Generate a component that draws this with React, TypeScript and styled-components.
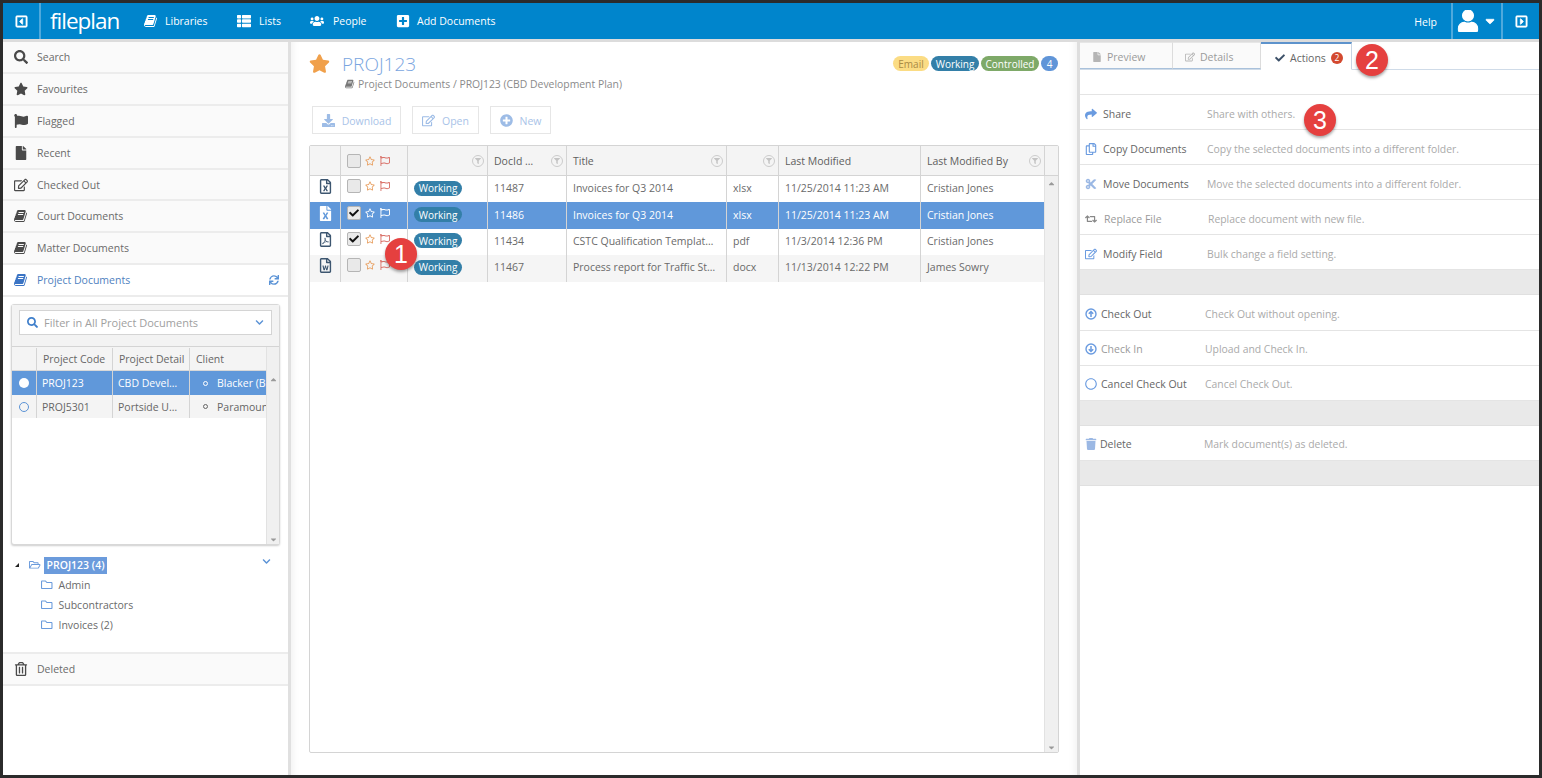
import React from "react";
import styled, { createGlobalStyle } from "styled-components";
import {
  FaSearch, FaStar, FaRegStar, FaFlag, FaRegFlag, FaFile, FaRegEdit, FaSync, FaThList, FaUsers,
  FaPlusSquare, FaChevronDown, FaRegFolder, FaRegFolderOpen, FaRegTrashAlt, FaTrash, FaDownload, FaPlusCircle,
  FaCheck, FaShare, FaRegCopy, FaCut, FaRetweet, FaRegCircle, FaFilter, FaUser, FaCaretDown, FaRegCaretSquareLeft,
  FaRegCaretSquareRight, FaRegFileExcel, FaRegFilePdf, FaRegFileWord, FaCaretUp, FaFileExcel,
} from "react-icons/fa";

const Global = createGlobalStyle`
  html, body { margin: 0; padding: 0; background: #2b2b2b; }
  * { box-sizing: border-box; }
`;

const BookIcon = () => (
  <svg width="1em" height="1em" viewBox="0 0 1792 1792" fill="currentColor">
    <path d="M1639 478q40 57 18 129l-275 906q-19 64-76.5 107.5t-122.5 43.5h-923q-77 0-148.5-53.5t-99.5-131.5q-24-67-2-127 0-4 3-27t4-37q1-8-3-21.5t-3-19.5q2-11 8-21t16.5-23.5 16.5-23.5q23-38 45-91.5t30-91.5q3-10 .5-30t-.5-28q3-11 17-28t17-23q21-36 42-92t25-90q1-9-2.5-32t.5-28q4-13 22-30.5t22-22.5q19-26 42.5-84.5t27.5-96.5q1-8-3-25.5t-2-26.5q2-8 9-18t18-23 17-21q8-12 16.5-30.5t15-35 16-36 19.5-32 26.5-23.5 36-11.5 47.5 5.5l-1 3q38-9 51-9h761q74 0 114 56t18 130l-274 906q-36 119-71.5 153.5t-128.5 34.5h-869q-27 0-38 15-11 16-1 43 24 70 144 70h923q29 0 56-15.5t35-41.5l300-987q7-22 5-57 38 15 59 43zm-1064 2q-4 13 2 22.5t20 9.5h608q13 0 25.5-9.5t16.5-22.5l21-64q4-13-2-22.5t-20-9.5h-608q-13 0-25.5 9.5t-16.5 22.5zm-83 256q-4 13 2 22.5t20 9.5h608q13 0 25.5-9.5t16.5-22.5l21-64q4-13-2-22.5t-20-9.5h-608q-13 0-25.5 9.5t-16.5 22.5z" />
  </svg>
);

const CircleArrow = ({ down }: { down?: boolean }) => (
  <svg width="12" height="12" viewBox="0 0 12 12" fill="none" stroke="currentColor">
    <circle cx="6" cy="6" r="5" strokeWidth="1.4" />
    <path d={down ? "M6 3v5.4M3.8 6.2 6 8.5l2.2-2.3" : "M6 9V3.6M3.8 5.8 6 3.5l2.2 2.3"} strokeWidth="1.5" />
  </svg>
);

const Frame = styled.div`
  position: relative;
  width: 1542px;
  height: 778px;
  padding: 3px;
  background: #2b2b2b;
  font-family: "Open Sans", "Liberation Sans", sans-serif;
  font-size: 10.5px;
  color: #666;
  overflow: hidden;
  display: flex;
  flex-direction: column;
`;

const TopBar = styled.header`
  height: 36px;
  flex: none;
  background: #0085cc;
  color: #fff;
  display: flex;
  align-items: stretch;
`;
const BarSquare = styled.div<{ $w: number }>`
  width: ${(p) => p.$w}px;
  flex: none;
  display: flex;
  align-items: center;
  justify-content: center;
  font-size: 13px;
  svg path { stroke: currentColor; stroke-width: 24px; }
`;
const BarSquareRight = styled(BarSquare)`
  border-left: 2px solid #4fa9dc;
`;
const BarSquareLeft = styled(BarSquare)`
  border-right: 2px solid #4fa9dc;
`;
const Logo = styled.div`
  font-size: 22.5px;
  font-weight: 500;
  letter-spacing: -1px;
  line-height: 36px;
  margin-left: 9px;
  width: 74px;
  margin-right: 20px;
  padding-bottom: 3px;
`;
const NavItem = styled.div<{ $w: number; $gap: number }>`
  display: flex;
  align-items: center;
  font-size: 10.5px;
  gap: ${(p) => p.$gap}px;
  width: ${(p) => p.$w}px;
  flex: none;
  svg { font-size: 14px; }
`;
const Spacer = styled.div`
  flex: 1;
`;
const HelpLink = styled.div`
  align-self: center;
  margin-right: 14px;
  padding-top: 1px;
`;
const UserMenu = styled(BarSquareRight)`
  gap: 4px;
  svg:first-child { font-size: 22px; }
  svg:last-child { font-size: 14px; }
`;

const Body = styled.div`
  flex: 1;
  min-height: 0;
  display: flex;
  background: #fff;
  border-top: 3px solid #dcdcdc;
`;

const Sidebar = styled.aside`
  width: 288px;
  flex: none;
  border-right: 3px solid #e0e0e0;
  background: #fff;
  display: flex;
  flex-direction: column;
`;
const SideRow = styled.div<{ $active?: boolean }>`
  height: 31.9px;
  flex: none;
  display: flex;
  align-items: center;
  padding: 0 9px 0 11px;
  background: ${(p) => (p.$active ? "#fff" : "#fafafa")};
  color: ${(p) => (p.$active ? "#4f7fc0" : "#6a6a6a")};
  border-bottom: 2px solid #ececec;
`;
const SideIcon = styled.span<{ $active?: boolean }>`
  width: 23px;
  flex: none;
  display: flex;
  font-size: 14px;
  color: ${(p) => (p.$active ? "#3b74c4" : "#4a4a4a")};
`;
const SideLabel = styled.span`
  flex: 1;
`;
const RefreshIcon = styled.span`
  color: #5b93d6;
  font-size: 10px;
  display: flex;
`;

const ProjectSection = styled.div`
  height: 356.8px;
  flex: none;
  padding: 7px 8px 0 8px;
  border-bottom: 2px solid #ececec;
  display: flex;
  flex-direction: column;
`;
const PickerCard = styled.div`
  height: 241px;
  flex: none;
  border: 1px solid #d8d8d8;
  border-radius: 3px;
  box-shadow: 0 1px 2px rgba(0, 0, 0, 0.2);
  display: flex;
  flex-direction: column;
  background: #fff;
`;
const FilterBar = styled.div`
  height: 42px;
  flex: none;
  padding: 5px 7px 11px 7px;
  background: #f3f3f3;
  border-bottom: 1px solid #d4d4d4;
`;
const FilterInput = styled.div`
  height: 25px;
  background: #fff;
  border: 1px solid #d4d4d4;
  display: flex;
  align-items: center;
  padding: 0 7px;
  gap: 6px;
  color: #a0a0a0;
  font-size: 11px;
`;
const FilterIcon = styled.span`
  color: #3f7fcb;
  display: flex;
  font-size: 11px;
`;
const ChevronIcon = styled.span`
  color: #5b93d6;
  font-size: 9px;
  display: flex;
  margin-left: auto;
`;
const PickerGrid = styled.div`
  flex: 1;
  display: grid;
  grid-template-columns: 1fr 13px;
  min-height: 0;
`;
const PickerColumn = styled.div`
  display: flex;
  flex-direction: column;
  min-width: 0;
`;
const PickerRow = styled.div<{ $kind: "head" | "sel" | "alt" }>`
  display: grid;
  grid-template-columns: 24px 76px 77px 1fr;
  height: ${(p) => (p.$kind === "alt" ? 23 : 24)}px;
  padding-top: ${(p) => (p.$kind === "head" ? 1 : 0)}px;
  flex: none;
  background: ${(p) => (p.$kind === "sel" ? "#6098da" : "#f4f4f4")};
  color: ${(p) => (p.$kind === "sel" ? "#fff" : "#666")};
  border-bottom: ${(p) => (p.$kind === "head" ? "1px solid #d8d8d8" : "none")};
`;
const PickerCell = styled.div`
  display: flex;
  align-items: center;
  padding: 0 5px;
  border-left: 1px solid #d4d4d4;
  white-space: nowrap;
  overflow: hidden;
  min-width: 0;
  &:first-child { border-left: none; justify-content: center; padding: 0; }
`;
const HeadCellText = styled.span`
  padding-left: 1px;
`;
const ClientDot = styled.span`
  width: 5px;
  height: 5px;
  border: 1px solid currentColor;
  border-radius: 50%;
  margin: 0 9px 0 8px;
  flex: none;
`;
const Radio = styled.span<{ $on?: boolean }>`
  width: 10px;
  height: 10px;
  border-radius: 50%;
  background: ${(p) => (p.$on ? "#fff" : "transparent")};
  border: ${(p) => (p.$on ? "none" : "1.5px solid #5b93d6")};
`;
const ScrollTrack = styled.div<{ $head?: number }>`
  background: #f0f0f0;
  border-left: 1px solid #e2e2e2;
  display: flex;
  flex-direction: column;
  justify-content: space-between;
  align-items: center;
  padding-top: ${(p) => p.$head ?? 0}px;
  color: #9a9a9a;
  font-size: 9px;
  svg { display: block; }
`;
const Tree = styled.div`
  position: relative;
  padding: 10px 0 0 4px;
`;
const TreeRow = styled.div<{ $indent: number }>`
  height: 20px;
  display: flex;
  align-items: center;
  gap: 6px;
  padding-left: ${(p) => p.$indent}px;
  color: #6a6a6a;
`;
const TreeIcon = styled.span`
  color: #6b9bdc;
  font-size: 11.5px;
  display: flex;
`;
const TreeArrow = styled.span`
  width: 0;
  height: 0;
  border-left: 4px solid transparent;
  border-bottom: 4px solid #222;
  margin-right: 4px;
`;
const TreeSelected = styled.span`
  background: #6b9bdc;
  color: #fff;
  font-weight: 600;
  padding: 1px 3px;
  line-height: 15px;
  margin-left: -3px;
`;
const TreeChevron = styled.span`
  position: absolute;
  right: 9px;
  top: 12px;
  color: #5b93d6;
  font-size: 9px;
  display: flex;
`;

const Main = styled.main`
  width: 786px;
  flex: none;
  padding: 0 0 0 18px;
  display: flex;
  flex-direction: column;
  background: #fff;
  box-shadow: inset 9px 0 8px -8px rgba(0,0,0,0.07), inset -9px 0 8px -8px rgba(0,0,0,0.07);
`;
const TitleRow = styled.div`
  width: 750px;
  height: 64px;
  flex: none;
  display: flex;
  align-items: flex-start;
  padding-top: 9px;
`;
const BigStar = styled.span`
  color: #f0a04b;
  font-size: 21px;
  display: flex;
  margin: 2px 12px 0 0;
`;
const TitleBlock = styled.div`
  display: flex;
  flex-direction: column;
`;
const Title = styled.div`
  font-size: 19px;
  font-weight: 300;
  color: #7aa5e0;
  line-height: 26px;
`;
const Crumb = styled.div`
  display: flex;
  align-items: center;
  gap: 3px;
  font-size: 10.4px;
  color: #8a8a8a;
  margin: 0 0 0 3px;
  svg { font-size: 10px; color: #777; }
`;
const Badges = styled.div`
  margin-left: auto;
  margin-top: 5px;
  display: flex;
  gap: 2px;
  padding-right: 1px;
`;
const Pill = styled.span<{ $bg: string; $fg: string; $w: number }>`
  height: 15px;
  width: ${(p) => p.$w}px;
  border-radius: 8px;
  background: ${(p) => p.$bg};
  color: ${(p) => p.$fg};
  font-size: 10px;
  display: inline-flex;
  align-items: center;
  justify-content: center;
`;
const Toolbar = styled.div`
  height: 28px;
  flex: none;
  display: flex;
  gap: 11px;
  margin: 0 0 11px 3px;
`;
const ToolButton = styled.div<{ $w: number }>`
  width: ${(p) => p.$w}px;
  border: 1px solid #e6e6e6;
  display: flex;
  align-items: center;
  justify-content: center;
  gap: 7px;
  padding-top: 1px;
  color: #a9c3e8;
  svg { font-size: 13px; color: #9dbce6; }
`;
const TableBox = styled.div`
  width: 750px;
  height: 608px;
  flex: none;
  border: 1px solid #d4d4d4;
  border-radius: 2px;
  display: grid;
  grid-template-columns: 1fr 14px;
  grid-template-rows: 30px 1fr;
  background: #fff;
`;
const Cols = "30px 67px 80px 79px 160px 52px 142px 1fr";
const HeadRow = styled.div`
  grid-column: 1 / 2;
  display: grid;
  grid-template-columns: ${Cols};
  background: #f4f4f4;
  border-bottom: 1px solid #d4d4d4;
`;
const HeadCorner = styled.div`
  background: #f4f4f4;
  border-left: 1px solid #d4d4d4;
  border-bottom: 1px solid #d4d4d4;
`;
const RowsArea = styled.div`
  display: flex;
  flex-direction: column;
  min-width: 0;
`;
const DocRow = styled.div<{ $kind?: "sel" | "alt" }>`
  height: 26.4px;
  flex: none;
  display: grid;
  grid-template-columns: ${Cols};
  background: ${(p) => (p.$kind === "sel" ? "#6098da" : p.$kind === "alt" ? "#f5f5f5" : "#fff")};
  color: ${(p) => (p.$kind === "sel" ? "#fff" : "#6a6a6a")};
`;
const Cell = styled.div`
  display: flex;
  align-items: center;
  padding: 0 6px 2px 6px;
  border-left: 1px solid #d4d4d4;
  white-space: nowrap;
  overflow: hidden;
  min-width: 0;
  &:first-child { border-left: none; justify-content: center; padding: 0 0 5px 0; }
`;
const HeadCell = styled(Cell)`
  justify-content: space-between;
  padding: 1px 3px 0 6px;
  color: #5e5e5e;
  &:first-child { padding: 0; }
`;
const FilterBadge = styled.span`
  width: 12px;
  height: 12px;
  border: 1px solid #ccc;
  border-radius: 50%;
  color: #c4c4c4;
  font-size: 6px;
  display: inline-flex;
  align-items: center;
  justify-content: center;
  margin-left: auto;
`;
const FileGlyph = styled.span<{ $light?: boolean }>`
  font-size: 15px;
  display: flex;
  color: ${(p) => (p.$light ? "#fff" : "#3d5670")};
`;
const MarkCell = styled(Cell)`
  gap: 4px;
  padding: 0 0 6px 6px;
`;
const HeadMarkCell = styled(MarkCell)`
  padding: 1px 0 0 6px;
`;
const Check = styled.span`
  width: 14px;
  height: 14px;
  background: #e9e9e9;
  border: 1px solid #b5b5b5;
  border-radius: 2px;
  display: inline-flex;
  align-items: center;
  justify-content: center;
  color: #111;
  font-size: 10px;
  flex: none;
`;
const MarkStar = styled.span<{ $light?: boolean }>`
  color: ${(p) => (p.$light ? "#fff" : "#e8a062")};
  font-size: 10px;
  display: flex;
`;
const MarkFlag = styled.span<{ $light?: boolean }>`
  color: ${(p) => (p.$light ? "#fff" : "#d9726a")};
  font-size: 10px;
  display: flex;
  margin-left: 1px;
`;

const Right = styled.section`
  flex: 1;
  min-width: 0;
  border-left: 3px solid #dedede;
  display: flex;
  flex-direction: column;
  background: #fff;
`;
const Tabs = styled.div`
  height: 28px;
  flex: none;
  display: flex;
  border-bottom: 1px solid #cfdbe8;
`;
const Tab = styled.div<{ $w: number; $on?: boolean }>`
  width: ${(p) => p.$w}px;
  flex: none;
  display: flex;
  align-items: center;
  gap: 5px;
  padding: 2px 0 0 ${(p) => (p.$on ? 14 : 12)}px;
  background: ${(p) => (p.$on ? "#fff" : "#fafafa")};
  color: ${(p) => (p.$on ? "#666" : "#9a9a9a")};
  border-right: 1px solid ${(p) => (p.$on ? "#c8d5e4" : "#dcdcdc")};
  border-top: ${(p) => (p.$on ? 2 : 1)}px solid ${(p) => (p.$on ? "#5e93cc" : "#e6e6e6")};
  margin-bottom: ${(p) => (p.$on ? -1 : 0)}px;
  border-bottom: ${(p) => (p.$on ? "1px solid #fff" : "1px solid #a9c1db")};
`;
const TabIcon = styled.span<{ $on?: boolean }>`
  display: flex;
  font-size: 10px;
  color: ${(p) => (p.$on ? "#3c5068" : "#b5b5b5")};
`;
const CountDot = styled.span`
  width: 12px;
  height: 12px;
  border-radius: 50%;
  background: #d3492f;
  color: #fff;
  font-size: 8.5px;
  display: inline-flex;
  align-items: center;
  justify-content: center;
`;
const BlankRow = styled.div`
  height: 25px;
  flex: none;
  border-bottom: 1px solid #e4e4e4;
`;
const ActionRow = styled.div`
  height: 35.1px;
  flex: none;
  display: flex;
  align-items: center;
  padding: 3px 0 0 5px;
  border-bottom: 1px solid #e4e4e4;
`;
const ActionIcon = styled.span<{ $w: number; $tone?: "dim" | "soft" }>`
  width: ${(p) => p.$w}px;
  flex: none;
  display: flex;
  font-size: 12px;
  color: ${(p) => (p.$tone === "dim" ? "#888" : p.$tone === "soft" ? "#9bb8e4" : "#6a9be0")};
`;
const ActionLabel = styled.span<{ $dim?: boolean }>`
  width: 104px;
  flex: none;
  color: ${(p) => (p.$dim ? "#9a9a9a" : "#666")};
  white-space: nowrap;
`;
const ActionDesc = styled.span`
  color: #aaa;
  font-size: 10.4px;
`;
const GreySpacer = styled.div`
  height: 25px;
  flex: none;
  background: #e9e9e9;
  border-bottom: 1px solid #e0e0e0;
`;

const Marker = styled.div<{ $x: number; $y: number }>`
  position: absolute;
  left: ${(p) => p.$x - 16}px;
  top: ${(p) => p.$y - 16}px;
  width: 32px;
  height: 32px;
  border-radius: 50%;
  background: #e5403f;
  box-shadow: 0 2px 3px rgba(0, 0, 0, 0.35);
  color: #fff;
  font-family: "Liberation Sans", Arial, sans-serif;
  font-size: 25px;
  display: flex;
  align-items: center;
  justify-content: center;
`;

const sideTop = [
  { icon: <FaSearch />, label: "Search" },
  { icon: <FaStar />, label: "Favourites" },
  { icon: <FaFlag />, label: "Flagged" },
  { icon: <FaFile />, label: "Recent" },
  { icon: <FaRegEdit />, label: "Checked Out" },
  { icon: <BookIcon />, label: "Court Documents" },
  { icon: <BookIcon />, label: "Matter Documents" },
];

const docs = [
  { file: <FaRegFileExcel />, checked: false, id: "11487", title: "Invoices for Q3 2014", ext: "xlsx", date: "11/25/2014 11:23 AM", by: "Cristian Jones" },
  { file: <FaFileExcel />, checked: true, id: "11486", title: "Invoices for Q3 2014", ext: "xlsx", date: "11/25/2014 11:23 AM", by: "Cristian Jones", kind: "sel" as const },
  { file: <FaRegFilePdf />, checked: true, id: "11434", title: "CSTC Qualification Templat…", ext: "pdf", date: "11/3/2014 12:36 PM", by: "Cristian Jones" },
  { file: <FaRegFileWord />, checked: false, id: "11467", title: "Process report for Traffic St…", ext: "docx", date: "11/13/2014 12:22 PM", by: "James Sowry", kind: "alt" as const },
];

type Act = { icon: React.ReactNode; w: number; label: string; desc: string; dim?: boolean; tone?: "dim" | "soft" };
const actionsA: Act[] = [
  { icon: <FaShare />, w: 18, label: "Share", desc: "Share with others." },
  { icon: <FaRegCopy />, w: 18, label: "Copy Documents", desc: "Copy the selected documents into a different folder." },
  { icon: <FaCut />, w: 18, label: "Move Documents", desc: "Move the selected documents into a different folder.", tone: "soft" },
  { icon: <FaRetweet />, w: 19, label: "Replace File", desc: "Replace document with new file.", dim: true, tone: "dim" },
  { icon: <FaRegEdit />, w: 18, label: "Modify Field", desc: "Bulk change a field setting." },
];
const actionsB: Act[] = [
  { icon: <CircleArrow />, w: 16, label: "Check Out", desc: "Check Out without opening." },
  { icon: <CircleArrow down />, w: 16, label: "Check In", desc: "Upload and Check In.", dim: true },
  { icon: <FaRegCircle />, w: 16, label: "Cancel Check Out", desc: "Cancel Check Out." },
];
const actionsC: Act[] = [
  { icon: <FaTrash />, w: 15, label: "Delete", desc: "Mark document(s) as deleted.", tone: "soft" },
];

const ActionList = ({ items }: { items: Act[] }) => (
  <>
    {items.map((a) => (
      <ActionRow key={a.label}>
        <ActionIcon $w={a.w} $tone={a.tone}>{a.icon}</ActionIcon>
        <ActionLabel $dim={a.dim}>{a.label}</ActionLabel>
        <ActionDesc>{a.desc}</ActionDesc>
      </ActionRow>
    ))}
  </>
);

const HeadFilter = () => (
  <FilterBadge>
    <FaFilter />
  </FilterBadge>
);

export default function App() {
  return (
    <Frame>
      <Global />
      <TopBar>
        <BarSquareLeft $w={38}><FaRegCaretSquareLeft /></BarSquareLeft>
        <Logo>fileplan</Logo>
        <NavItem $w={93} $gap={7}><BookIcon />Libraries</NavItem>
        <NavItem $w={73} $gap={8}><FaThList />Lists</NavItem>
        <NavItem $w={86} $gap={9}><FaUsers />People</NavItem>
        <NavItem $w={110} $gap={7}><FaPlusSquare />Add Documents</NavItem>
        <Spacer />
        <HelpLink>Help</HelpLink>
        <UserMenu $w={50}><FaUser /><FaCaretDown /></UserMenu>
        <BarSquareRight $w={38}><FaRegCaretSquareRight /></BarSquareRight>
      </TopBar>
      <Body>
        <Sidebar>
          {sideTop.map((s) => (
            <SideRow key={s.label}>
              <SideIcon>{s.icon}</SideIcon>
              <SideLabel>{s.label}</SideLabel>
            </SideRow>
          ))}
          <SideRow $active>
            <SideIcon $active><BookIcon /></SideIcon>
            <SideLabel>Project Documents</SideLabel>
            <RefreshIcon><FaSync /></RefreshIcon>
          </SideRow>
          <ProjectSection>
            <PickerCard>
              <FilterBar>
                <FilterInput>
                  <FilterIcon><FaSearch /></FilterIcon>
                  Filter in All Project Documents
                  <ChevronIcon><FaChevronDown /></ChevronIcon>
                </FilterInput>
              </FilterBar>
              <PickerGrid>
                <PickerColumn>
                  <PickerRow $kind="head">
                    <PickerCell />
                    <PickerCell><HeadCellText>Project Code</HeadCellText></PickerCell>
                    <PickerCell><HeadCellText>Project Detail</HeadCellText></PickerCell>
                    <PickerCell><HeadCellText>Client</HeadCellText></PickerCell>
                  </PickerRow>
                  <PickerRow $kind="sel">
                    <PickerCell><Radio $on /></PickerCell>
                    <PickerCell>PROJ123</PickerCell>
                    <PickerCell>CBD Devel…</PickerCell>
                    <PickerCell><ClientDot />Blacker (Bl</PickerCell>
                  </PickerRow>
                  <PickerRow $kind="alt">
                    <PickerCell><Radio /></PickerCell>
                    <PickerCell>PROJ5301</PickerCell>
                    <PickerCell>Portside U…</PickerCell>
                    <PickerCell><ClientDot />Paramoun</PickerCell>
                  </PickerRow>
                </PickerColumn>
                <ScrollTrack $head={28}><FaCaretUp /><FaCaretDown /></ScrollTrack>
              </PickerGrid>
            </PickerCard>
            <Tree>
              <TreeRow $indent={0}>
                <TreeArrow />
                <TreeIcon><FaRegFolderOpen /></TreeIcon>
                <TreeSelected>PROJ123 (4)</TreeSelected>
              </TreeRow>
              <TreeRow $indent={26}><TreeIcon><FaRegFolder /></TreeIcon>Admin</TreeRow>
              <TreeRow $indent={26}><TreeIcon><FaRegFolder /></TreeIcon>Subcontractors</TreeRow>
              <TreeRow $indent={26}><TreeIcon><FaRegFolder /></TreeIcon>Invoices (2)</TreeRow>
              <TreeChevron><FaChevronDown /></TreeChevron>
            </Tree>
          </ProjectSection>
          <SideRow>
            <SideIcon><FaRegTrashAlt /></SideIcon>
            <SideLabel>Deleted</SideLabel>
          </SideRow>
        </Sidebar>
        <Main>
          <TitleRow>
            <BigStar><FaStar /></BigStar>
            <TitleBlock>
              <Title>PROJ123</Title>
              <Crumb><BookIcon />Project Documents / PROJ123 (CBD Development Plan)</Crumb>
            </TitleBlock>
            <Badges>
              <Pill $bg="#fbdc84" $fg="#a98a45" $w={36}>Email</Pill>
              <Pill $bg="#337fa8" $fg="#fff" $w={48}>Working</Pill>
              <Pill $bg="#7ea968" $fg="#fff" $w={58}>Controlled</Pill>
              <Pill $bg="#6095d8" $fg="#fff" $w={17}>4</Pill>
            </Badges>
          </TitleRow>
          <Toolbar>
            <ToolButton $w={89}><FaDownload />Download</ToolButton>
            <ToolButton $w={67}><FaRegEdit />Open</ToolButton>
            <ToolButton $w={61}><FaPlusCircle />New</ToolButton>
          </Toolbar>
          <TableBox>
            <HeadRow>
              <HeadCell />
              <HeadMarkCell>
                <Check />
                <MarkStar><FaRegStar /></MarkStar>
                <MarkFlag><FaRegFlag /></MarkFlag>
              </HeadMarkCell>
              <HeadCell><HeadFilter /></HeadCell>
              <HeadCell>DocId …<HeadFilter /></HeadCell>
              <HeadCell>Title<HeadFilter /></HeadCell>
              <HeadCell><HeadFilter /></HeadCell>
              <HeadCell>Last Modified</HeadCell>
              <HeadCell>Last Modified By<HeadFilter /></HeadCell>
            </HeadRow>
            <HeadCorner />
            <RowsArea>
              {docs.map((d) => {
                const light = d.kind === "sel";
                return (
                  <DocRow key={d.id} $kind={d.kind}>
                    <Cell><FileGlyph $light={light}>{d.file}</FileGlyph></Cell>
                    <MarkCell>
                      <Check>{d.checked && <FaCheck />}</Check>
                      <MarkStar $light={light}><FaRegStar /></MarkStar>
                      <MarkFlag $light={light}><FaRegFlag /></MarkFlag>
                    </MarkCell>
                    <Cell><Pill $bg="#337fa8" $fg="#fff" $w={48}>Working</Pill></Cell>
                    <Cell>{d.id}</Cell>
                    <Cell>{d.title}</Cell>
                    <Cell>{d.ext}</Cell>
                    <Cell>{d.date}</Cell>
                    <Cell>{d.by}</Cell>
                  </DocRow>
                );
              })}
            </RowsArea>
            <ScrollTrack $head={3}><FaCaretUp /><FaCaretDown /></ScrollTrack>
          </TableBox>
        </Main>
        <Right>
          <Tabs>
            <Tab $w={93}><TabIcon><FaFile /></TabIcon>Preview</Tab>
            <Tab $w={88}><TabIcon><FaRegEdit /></TabIcon>Details</Tab>
            <Tab $w={91} $on><TabIcon $on><FaCheck /></TabIcon>Actions<CountDot>2</CountDot></Tab>
          </Tabs>
          <BlankRow />
          <ActionList items={actionsA} />
          <GreySpacer />
          <ActionList items={actionsB} />
          <GreySpacer />
          <ActionList items={actionsC} />
          <GreySpacer />
        </Right>
      </Body>
      <Marker $x={401} $y={254}>1</Marker>
      <Marker $x={1372} $y={60}>2</Marker>
      <Marker $x={1320} $y={120}>3</Marker>
    </Frame>
  );
}
